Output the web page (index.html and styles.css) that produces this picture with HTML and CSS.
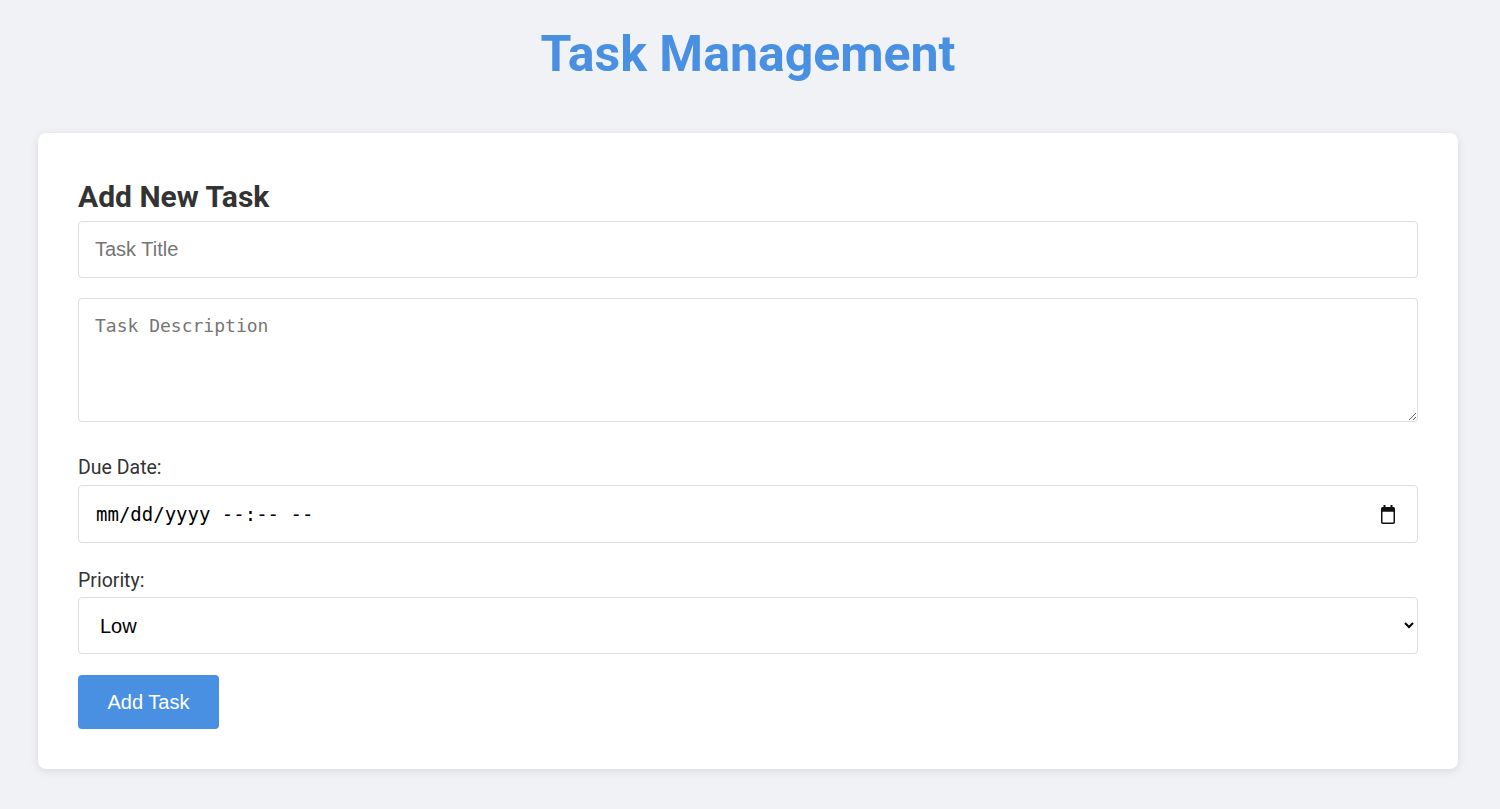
FILE: index.html
```html
<!DOCTYPE html>
<html lang="en">
<head>
<meta charset="utf-8">
<title>Task Management</title>
<link rel="stylesheet" href="styles.css">
</head>
<body>
<div class="page">
  <h1 class="title">Task Management</h1>
  <section class="card">
    <h2 class="card-title">Add New Task</h2>
    <form class="task-form">
      <input class="field field-text" type="text" placeholder="Task Title">
      <textarea class="field field-area" placeholder="Task Description"></textarea>
      <label class="label" for="due">Due Date:</label>
      <div class="field field-date">
        <input class="date-input" id="due" type="text" placeholder="mm/dd/yyyy --:-- --">
        <span class="date-icon" aria-hidden="true">
          <svg width="14" height="19" viewBox="0 0 14 19">
            <rect x="2.5" y="0" width="2" height="4" fill="#111"/>
            <rect x="9.5" y="0" width="2" height="4" fill="#111"/>
            <rect x="0.75" y="2.75" width="12.5" height="15.5" rx="1" fill="none" stroke="#111" stroke-width="1.5"/>
            <rect x="0.75" y="2.75" width="12.5" height="4" fill="#111"/>
          </svg>
        </span>
      </div>
      <label class="label" for="priority">Priority:</label>
      <select class="field field-select" id="priority">
        <option>Low</option>
        <option>Medium</option>
        <option>High</option>
      </select>
      <button class="btn" type="button">Add Task</button>
    </form>
  </section>
</div>
</body>
</html>
```
FILE: styles.css
```css
html, body {
  margin: 0;
  padding: 0;
}
body {
  background: #f0f2f5;
  font-family: Roboto, "Liberation Sans", Arial, sans-serif;
  color: #333;
}
.page {
  padding: 26px 42px 40px 38px;
}
.title {
  margin: 0 0 51px 0;
  text-align: center;
  color: #4a90e2;
  font-size: 50px;
  font-weight: 700;
  line-height: 56px;
}
.card {
  background: #fff;
  border-radius: 8px;
  box-shadow: 0 2px 10px rgba(0, 0, 0, 0.1);
  padding: 40px;
}
.card-title {
  margin: 7px 0 7px 0;
  font-size: 30px;
  font-weight: 700;
  line-height: 34px;
  color: #333;
}
.task-form {
  display: flex;
  flex-direction: column;
  align-items: flex-start;
}
.field {
  display: block;
  width: 100%;
  box-sizing: border-box;
  border: 1px solid #ddd;
  border-radius: 4px;
  background: #fff;
  font-family: "Liberation Sans", Arial, sans-serif;
  font-size: 20px;
  color: #000;
  margin: 0 0 20px 0;
  padding: 0 16px;
}
.field::placeholder {
  color: #757575;
}
.field-text {
  height: 57px;
}
.field-area {
  height: 124px;
  padding: 16px;
  resize: vertical;
  font-family: "DejaVu Sans Mono", "Liberation Mono", monospace;
  font-size: 18px;
  margin-bottom: 35px;
}
.field-date {
  height: 58px;
  display: flex;
  align-items: center;
  padding: 0 22px 0 17px;
}
.date-input {
  flex: 1;
  min-width: 0;
  border: none;
  outline: none;
  padding: 0;
  background: transparent;
  font-family: "DejaVu Sans Mono", "Liberation Mono", monospace;
  font-size: 19px;
  color: #000;
}
.date-input::placeholder {
  color: #000;
}
.date-icon {
  display: flex;
  width: 14px;
  height: 19px;
  margin-top: 1px;
}
.field-select {
  height: 57px;
  padding: 0 10px 0 17px;
}
.label {
  display: block;
  font-size: 19.5px;
  line-height: 21px;
  color: #333;
  margin: 0 0 7px 0;
}
.field-date + .label {
  margin-top: 7px;
  margin-bottom: 6px;
}
.btn {
  background: #4a90e2;
  color: #fff;
  border: none;
  border-radius: 4px;
  font-family: "Liberation Sans", Arial, sans-serif;
  font-size: 20px;
  line-height: 22px;
  padding: 16px 29.5px;
  margin-top: 1px;
  cursor: pointer;
}
```
